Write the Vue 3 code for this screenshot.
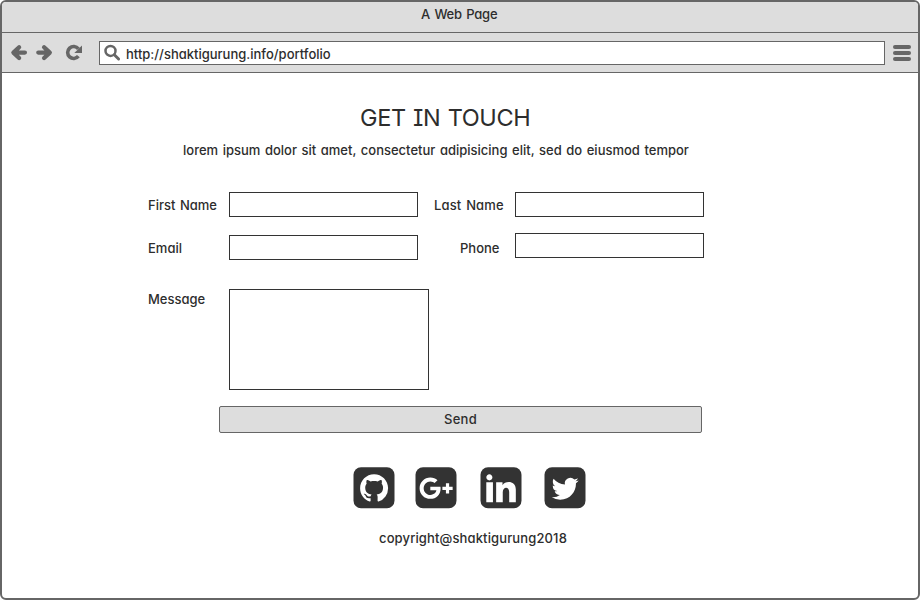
<script setup>
const socials = [
  {
    name: 'github',
    shift: 'translate(6.6 6.9) scale(1.75)',
    d: 'M8 0C3.58 0 0 3.58 0 8c0 3.54 2.29 6.53 5.47 7.59.4.07.55-.17.55-.38 0-.19-.01-.82-.01-1.49-2.01.37-2.53-.49-2.69-.94-.09-.23-.48-.94-.82-1.13-.28-.15-.68-.52-.01-.53.63-.01 1.08.58 1.23.82.72 1.21 1.87.87 2.33.66.07-.52.28-.87.51-1.07-1.78-.2-3.64-.89-3.64-3.95 0-.87.31-1.59.82-2.15-.08-.2-.36-1.02.08-2.12 0 0 .67-.21 2.2.82.64-.18 1.32-.27 2-.27s1.36.09 2 .27c1.53-1.04 2.2-.82 2.2-.82.44 1.1.16 1.92.08 2.12.51.56.82 1.27.82 2.15 0 3.07-1.87 3.75-3.65 3.95.29.25.54.73.54 1.48 0 1.07-.01 1.93-.01 2.2 0 .21.15.46.55.38A8.01 8.01 0 0 0 16 8c0-4.42-3.58-8-8-8z',
  },
  {
    name: 'google-plus',
    shift: 'translate(4.1 2.5) scale(1.53)',
    d: 'M7 11v2.4h3.97c-.16 1.03-1.2 3.02-3.97 3.02-2.39 0-4.34-1.98-4.34-4.42S4.61 7.58 7 7.58c1.36 0 2.27.58 2.79 1.08l1.9-1.83C10.47 5.69 8.89 5 7 5c-3.87 0-7 3.13-7 7s3.13 7 7 7c4.04 0 6.72-2.84 6.72-6.84 0-.46-.05-.81-.11-1.16zM17.2 8.8h2.1v2.3h2.3v2.1h-2.3v2.3h-2.1v-2.3h-2.3v-2.1h2.3z',
  },
  {
    name: 'linkedin',
    shift: 'translate(5.8 5.7) scale(1.23)',
    d: 'M4.98 3.5C4.98 4.88 3.87 6 2.5 6S.02 4.88.02 3.5 1.13 1 2.5 1s2.48 1.12 2.48 2.5zM5.4 7.5H0v16.2h5.4V7.5zm7.78 0H8.01v16.2h5.37v-8c0-4.67 5.23-5.05 5.23 0v8H24v-10.2c0-7.6-8.72-7.29-10.82-3.51V7.5z',
  },
  {
    name: 'twitter',
    shift: 'translate(7.2 8) scale(1.125)',
    d: 'M23.95 4.57a10 10 0 0 1-2.82.77 4.96 4.96 0 0 0 2.16-2.72c-.95.55-2 .95-3.13 1.18a4.92 4.92 0 0 0-8.38 4.48C7.69 8.1 4.07 6.13 1.64 3.16a4.92 4.92 0 0 0 1.52 6.57 4.9 4.9 0 0 1-2.23-.61v.06a4.92 4.92 0 0 0 3.95 4.83 5 5 0 0 1-2.21.08 4.94 4.94 0 0 0 4.6 3.42A9.87 9.87 0 0 1 0 19.54a13.99 13.99 0 0 0 7.55 2.21c9.05 0 14-7.5 14-13.98 0-.21 0-.42-.02-.63a9.94 9.94 0 0 0 2.46-2.55z',
  },
]
const arrow = 'M11.1 6.2 5.4 11.6 11.1 17M6 11.6H16.9'
</script>

<template>
  <div class="window">
    <header class="titlebar"><span class="t-title">A Web Page</span></header>
    <nav class="toolbar">
      <svg class="nav-icons" viewBox="0 0 80 24" fill="none" stroke="#666">
        <g stroke-width="4.3" stroke-linecap="round" stroke-linejoin="round">
          <path :d="arrow" />
          <path :d="arrow" transform="translate(47.2) scale(-1 1)" />
        </g>
        <path d="M70.4 7.8A6 6 0 1 0 70.4 15.2" stroke-width="3.6" />
        <path d="M74 4.4v7.6h-7.7z" fill="#666" stroke="none" />
      </svg>
      <div class="address">
        <svg class="search" viewBox="0 0 18 18" fill="none" stroke="#666">
          <circle cx="6.5" cy="6.9" r="5" stroke-width="2.5" />
          <path d="M10.3 10.8 14.6 15" stroke-width="3" stroke-linecap="round" />
        </svg>
        <span class="t-url">http://shaktigurung.info/portfolio</span>
      </div>
      <div class="menu"><i></i><i></i><i></i></div>
    </nav>
    <main class="page">
      <h1><span class="t-head">GET IN TOUCH</span></h1>
      <p class="lead"><span class="t-lead">lorem ipsum dolor sit amet, consectetur adipisicing elit, sed do eiusmod tempor</span></p>
      <form class="form" @submit.prevent>
        <div class="row">
          <label class="left"><span>First Name</span></label><input type="text" />
          <label class="right"><span class="t-last">Last Name</span></label><input type="text" />
        </div>
        <div class="row second">
          <label class="left"><span>Email</span></label><input type="text" />
          <label class="right phone"><span>Phone</span></label><input class="phone-input" type="text" />
        </div>
        <div class="row message">
          <label class="left"><span>Message</span></label><textarea></textarea>
        </div>
        <button type="submit"><span class="t-send">Send</span></button>
      </form>
      <div class="socials">
        <svg v-for="s in socials" :key="s.name" :class="s.name" viewBox="-.5 -.3 42 42">
          <rect width="41" height="41" rx="7.5" fill="#333" />
          <path :d="s.d" :transform="s.shift" fill="#fff" />
        </svg>
      </div>
      <footer><span class="t-copy">copyright@shaktigurung2018</span></footer>
    </main>
  </div>
</template>

<style>
body { background: #fff; }
</style>

<style scoped>
* { box-sizing: border-box; }
.window {
  width: 920px; height: 600px; border: 2px solid #666; border-radius: 6px;
  overflow: hidden; background: #fff; color: #2d2d2d;
  font: 500 13px/20px Inter, "Noto Sans", sans-serif;
  font-feature-settings: "cv11", "cv08";
  word-spacing: 1.1px;
}
span { white-space: nowrap; }
.titlebar { height: 31px; padding-top: 2px; padding-left: 419px; background: #ddd; border-bottom: 1px solid #666; }
.t-title { letter-spacing: -.2px; }
.toolbar { height: 40px; display: flex; align-items: flex-start; padding: 8px 6px 0 6px; background: #ddd; border-bottom: 1px solid #666; }
.nav-icons { width: 80px; height: 24px; flex: none; margin: 0 11px 0 0; }
.address { width: 786px; height: 24px; flex: none; display: flex; padding: 2px 0 0 4px; background: #fff; border: 1px solid #666; }
.search { width: 18px; height: 18px; margin-right: 4px; }
.menu { display: flex; flex-direction: column; gap: 2px; padding: 4px 0 0 8px; }
.menu i { width: 18px; height: 4px; border-radius: 2px; background: #666; }
.page { display: flex; flex-direction: column; }
h1 { margin: 30px 0 0 358px; font-weight: 400; font-size: 23.5px; line-height: 30px; letter-spacing: -.38px; }
.lead { margin: 7px 0 0 181px; }
.t-last { letter-spacing: .15px; }
.t-send { letter-spacing: .3px; }
.t-copy { letter-spacing: .13px; }
.form { display: flex; flex-direction: column; padding-left: 146px; margin-top: 32px; }
.row { display: flex; height: 25px; }
label { flex: none; padding-top: 3px; }
.left { width: 81px; }
.right { width: 97px; padding-left: 16px; }
input { width: 189px; height: 25px; padding: 0 6px; border: 1px solid #333; background: #fff; border-radius: 0; font: inherit; }
.second { margin-top: 18px; }
.phone { padding-left: 42px; }
.phone-input { margin-top: -2px; }
.message { height: 101px; margin-top: 29px; }
.message label { padding-top: 0; }
textarea { width: 200px; height: 101px; resize: none; border: 1px solid #333; background: #fff; border-radius: 0; font: inherit; }
button { width: 483px; height: 27px; margin: 16px 0 0 71px; padding: 0 0 2px; border: 1px solid #666; border-radius: 2px; background: #ddd; color: inherit; font: inherit; font-feature-settings: inherit; }
.socials { display: flex; margin: 34px 0 0 351px; height: 42px; }
.socials svg { width: 42px; height: 42px; flex: none; }
.google-plus { margin-left: 20px; }
.linkedin { margin-left: 23px; }
.twitter { margin-left: 22px; }
footer { margin: 19px 0 0 377px; }
</style>
